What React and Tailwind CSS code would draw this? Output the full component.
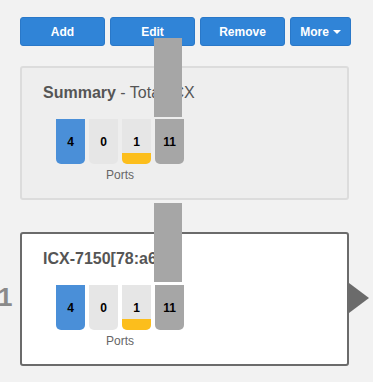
import React from "react";

const tiles = [
  { value: 4, kind: "blue" },
  { value: 0, kind: "plain" },
  { value: 1, kind: "warn" },
  { value: 11, kind: "gray" },
];

function Tile({ value, kind }) {
  const base =
    "relative flex h-[45px] w-[29px] items-center justify-center overflow-hidden rounded-b-[5px] text-[12px] font-bold text-black";
  const bg =
    kind === "blue"
      ? "bg-[#4a8fd8]"
      : kind === "gray"
      ? "bg-[#a6a6a6]"
      : "bg-[#e6e6e6]";
  return (
    <div className={`${base} ${bg}`}>
      {kind === "warn" && (
        <div className="absolute inset-x-0 bottom-0 h-[11px] bg-[#fcbe1c]" />
      )}
      <span className="relative">{value}</span>
    </div>
  );
}

function PortStats() {
  return (
    <div className="ml-[13px] mt-[17px] flex w-[128px] flex-col items-center">
      <div className="flex gap-[4px]">
        {tiles.map((t, i) => (
          <Tile key={i} {...t} />
        ))}
      </div>
      <div className="mt-[4px] text-[12px] leading-[14px] text-[#666]">Ports</div>
    </div>
  );
}

export default function App() {
  const buttons = ["Add", "Edit", "Remove"];
  return (
    <div
      className="relative h-[382px] w-[373px] overflow-hidden bg-[#f2f2f2]"
      style={{ fontFamily: '"Liberation Sans", Arial, sans-serif' }}
    >
      <div className="flex gap-[5px] pl-[20px] pt-[17px]">
        {buttons.map((b) => (
          <button
            key={b}
            className="flex h-[29px] w-[85px] items-center justify-center rounded-[3px] border border-[#2a78c8] bg-[#3084d7] text-[12px] font-bold text-white"
          >
            {b}
          </button>
        ))}
        <button className="flex h-[29px] w-[61px] items-center justify-center gap-[4px] rounded-[3px] border border-[#2a78c8] bg-[#3084d7] text-[12px] font-bold text-white">
          More
          <span className="mt-[1px] h-0 w-0 border-x-[4px] border-t-[4px] border-x-transparent border-t-white" />
        </button>
      </div>

      <div className="ml-[20px] mt-[20px] h-[134px] w-[329px] rounded-[3px] border-2 border-[#dcdcdc] bg-[#eeeeee] pl-[21px] pt-[16px]">
        <div className="text-[16px] leading-[18px] text-[#555]">
          <span className="font-bold">Summary</span> - Total ICX
        </div>
        <PortStats />
      </div>

      <div className="relative ml-[20px] mt-[32px] h-[134px] w-[329px] rounded-[3px] border-2 border-[#6b6b6b] bg-white pl-[21px] pt-[16px]">
        <div className="text-[16px] font-bold leading-[18px] text-[#555]">
          ICX-7150[78:a6<span className="text-[#c9d6ea]">:</span>
        </div>
        <PortStats />
        <div className="absolute left-[-24px] top-[50px] text-[26px] font-bold leading-[26px] text-[#8a8a8a]">
          1
        </div>
        <div className="absolute right-[-22px] top-[49px] h-0 w-0 border-y-[15px] border-l-[20px] border-y-transparent border-l-[#6b6b6b]" />
      </div>

      {/* connector line overlay */}
      <div className="absolute left-[154px] top-[38px] h-[79px] w-[28px] bg-[#a6a6a6]" />
      <div className="absolute left-[154px] top-[203px] h-[79px] w-[28px] bg-[#a6a6a6]" />
    </div>
  );
}
